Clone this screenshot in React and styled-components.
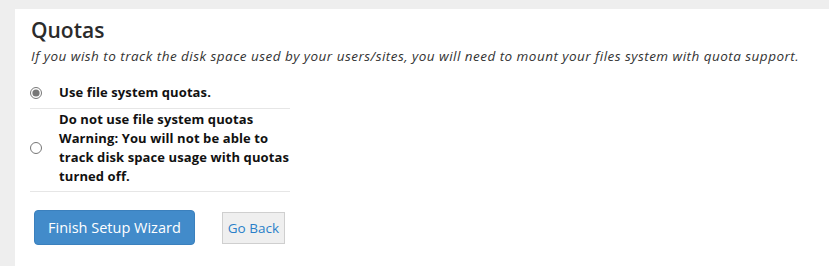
import React, { useState } from 'react'
import styled, { createGlobalStyle } from 'styled-components'

const GlobalStyle = createGlobalStyle`
      html, body {
            margin: 0;
            padding: 0;
            background: #eeeeee;
            font-family: "Open Sans", "Liberation Sans", sans-serif;
            color: #333;
      }
`

const Page = styled.div`
      width: 829px;
      height: 266px;
      padding: 9px 0 0 15px;
      box-sizing: border-box;
      overflow: hidden;
`

const Panel = styled.section`
      background: #fff;
      height: 100%;
      padding: 7px 16px 0 16px;
      box-sizing: border-box;

      h2 {
            margin: 0;
            font-size: 21px;
            font-weight: 600;
            line-height: 28px;
            color: #2b2b2b;
      }

      .lead {
            margin: 2px 0 0 0;
            font-size: 13.5px;
            font-style: italic;
            letter-spacing: 0.47px;
            line-height: 20px;
            color: #333;
            white-space: nowrap;
      }
`

const Options = styled.div`
      width: 260px;
      margin-top: 12px;
      margin-left: -1px;
`

const Option = styled.label`
      display: flex;
      align-items: center;
      padding: ${({ tall }) => (tall ? '1px 0 5px' : '5px 0 6px')};
      border-bottom: 1px solid #e6e6e6;
      cursor: pointer;

      input {
            margin: 0 17px 0 0;
            width: 12px;
            height: 12px;
            accent-color: #777;
            flex-shrink: 0;
      }

      span {
            font-size: 13px;
            font-weight: 700;
            letter-spacing: 0.1px;
            line-height: 19px;
            color: #111;
      }
`

const Actions = styled.div`
      display: flex;
      align-items: center;
      margin-top: 18px;
      padding-left: 3px;
      gap: 27px;
`

const Primary = styled.button`
      background: #428bca;
      border: 1px solid #3b80bd;
      border-radius: 4px;
      color: #fff;
      font-family: inherit;
      font-size: 14.5px;
      height: 35px;
      padding: 0 13px;
      cursor: pointer;
`

const Secondary = styled.button`
      background: #efefef;
      border: 1px solid #cfcfcf;
      color: #2a7fc9;
      font-family: inherit;
      font-size: 13.5px;
      height: 32px;
      padding: 0 5px;
      cursor: pointer;
`

export default function App() {
      const [choice, setChoice] = useState('use')

      return (
            <Page>
                  <GlobalStyle />
                  <Panel>
                        <h2>Quotas</h2>
                        <p className='lead'>If you wish to track the disk space used by your users/sites, you will need to mount your files system with quota support.</p>
                        <Options>
                              <Option>
                                    <input type='radio' name='quota' checked={choice === 'use'} onChange={() => setChoice('use')} />
                                    <span>Use file system quotas.</span>
                              </Option>
                              <Option tall>
                                    <input type='radio' name='quota' checked={choice === 'none'} onChange={() => setChoice('none')} />
                                    <span>Do not use file system quotas<br />Warning: You will not be able to track disk space usage with quotas turned off.</span>
                              </Option>
                        </Options>
                        <Actions>
                              <Primary>Finish Setup Wizard</Primary>
                              <Secondary>Go Back</Secondary>
                        </Actions>
                  </Panel>
            </Page>
      )
}
